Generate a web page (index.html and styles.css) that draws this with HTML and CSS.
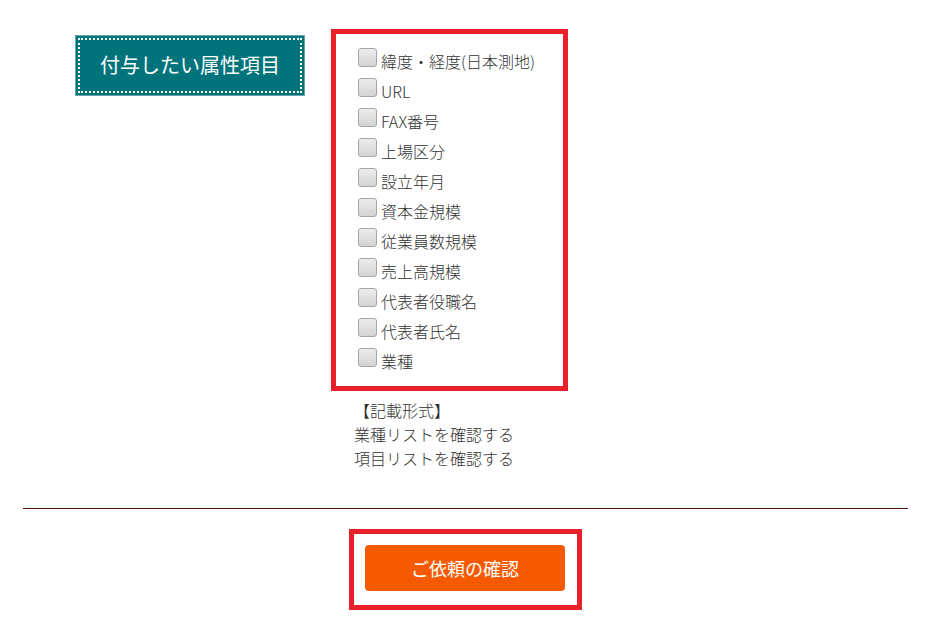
FILE: index.html
```html
<!DOCTYPE html>
<html>
	<head>
		<meta charset="UTF-8">
		<title>属性項目の選択</title>
		<link rel="stylesheet" href="styles.css">
	</head>
	<body>
		<div id="wrap">
			<div class="form-row">
				<div class="label-col">
					<div class="label">付与したい属性項目</div>
				</div>
				<div class="field-col">
					<ul class="checklist">
						<li><span class="check"></span>緯度・経度(日本測地)</li>
						<li><span class="check"></span>URL</li>
						<li><span class="check"></span>FAX番号</li>
						<li><span class="check"></span>上場区分</li>
						<li><span class="check"></span>設立年月</li>
						<li><span class="check"></span>資本金規模</li>
						<li><span class="check"></span>従業員数規模</li>
						<li><span class="check"></span>売上高規模</li>
						<li><span class="check"></span>代表者役職名</li>
						<li><span class="check"></span>代表者氏名</li>
						<li><span class="check"></span>業種</li>
					</ul>
					<div class="notes">
						<p>【記載形式】</p>
						<p>業種リストを確認する</p>
						<p>項目リストを確認する</p>
					</div>
				</div>
			</div>
			<hr class="line">
			<div class="submit">
				<div class="submit-box">
					<button class="btn">ご依頼の確認</button>
				</div>
			</div>
		</div>
	</body>
</html>
```
FILE: styles.css
```css
body, ul, p {
	padding: 0;
	margin: 0;
}
li {
	list-style: none;
}
body {
	font-family: "Noto Sans CJK JP", "Noto Sans", sans-serif;
	font-weight: 300;
	color: #333;
	background: #fff;
}

#wrap {
	padding: 0 27px 0 23px;
}

.form-row {
	display: flex;
	padding-top: 29px;
}
.label-col {
	width: 308px;
}
.label {
	margin: 6px 0 0 52px;
	width: 230px;
	height: 61px;
	box-sizing: border-box;
	border: 1px solid #5fa9ae;
	background-color: #00737b;
	outline: 2px dotted #fff;
	outline-offset: -5px;
	color: #fff;
	font-size: 20px;
	font-weight: 400;
	line-height: 57px;
	text-align: center;
}

.checklist {
	width: 237px;
	box-sizing: border-box;
	border: 5px solid #e8202a;
	padding: 12px 0 10px 22px;
}
.checklist li {
	display: flex;
	align-items: flex-start;
	height: 30px;
	font-size: 16px;
	line-height: 30px;
}
.check {
	width: 19px;
	height: 19px;
	box-sizing: border-box;
	margin: 2px 4px 0 0;
	border: 1px solid #a6a6a6;
	border-radius: 3px;
	background: linear-gradient(#ececec, #d4d4d4);
	flex-shrink: 0;
}

.notes {
	margin-top: 7px;
	padding-left: 23px;
	font-size: 16px;
	line-height: 24px;
}

.line {
	margin: 38px 0 0;
	border: 0;
	border-top: 1px solid #5b1212;
	height: 0;
}

.submit {
	display: flex;
	justify-content: center;
	padding-top: 20px;
}
.submit-box {
	width: 233px;
	height: 81px;
	box-sizing: border-box;
	border: 5px solid #e8202a;
	padding: 11px 0 0 11px;
}
.btn {
	width: 200px;
	height: 46px;
	border: 0;
	border-radius: 4px;
	background-color: #f55a00;
	color: #fff;
	font-family: inherit;
	font-size: 18px;
	font-weight: 400;
}
```
